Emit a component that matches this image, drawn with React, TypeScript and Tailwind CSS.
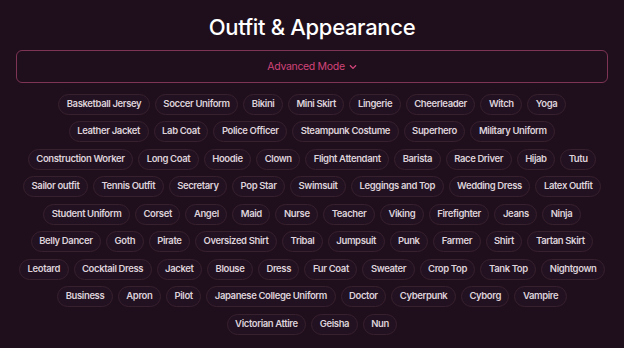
import { FaChevronDown } from 'react-icons/fa';

const ROWS = [
  ['Basketball Jersey', 'Soccer Uniform', 'Bikini', 'Mini Skirt', 'Lingerie', 'Cheerleader', 'Witch', 'Yoga'],
  ['Leather Jacket', 'Lab Coat', 'Police Officer', 'Steampunk Costume', 'Superhero', 'Military Uniform'],
  ['Construction Worker', 'Long Coat', 'Hoodie', 'Clown', 'Flight Attendant', 'Barista', 'Race Driver', 'Hijab', 'Tutu'],
  ['Sailor outfit', 'Tennis Outfit', 'Secretary', 'Pop Star', 'Swimsuit', 'Leggings and Top', 'Wedding Dress', 'Latex Outfit'],
  ['Student Uniform', 'Corset', 'Angel', 'Maid', 'Nurse', 'Teacher', 'Viking', 'Firefighter', 'Jeans', 'Ninja'],
  ['Belly Dancer', 'Goth', 'Pirate', 'Oversized Shirt', 'Tribal', 'Jumpsuit', 'Punk', 'Farmer', 'Shirt', 'Tartan Skirt'],
  ['Leotard', 'Cocktail Dress', 'Jacket', 'Blouse', 'Dress', 'Fur Coat', 'Sweater', 'Crop Top', 'Tank Top', 'Nightgown'],
  ['Business', 'Apron', 'Pilot', 'Japanese College Uniform', 'Doctor', 'Cyberpunk', 'Cyborg', 'Vampire'],
  ['Victorian Attire', 'Geisha', 'Nun'],
];

export default function App() {
  return (
    <div className="min-h-[348px] w-full overflow-hidden bg-[#1f0e1b] pt-3 font-['Inter',sans-serif]">
      <h1 className="text-center text-[22px] font-medium leading-[30px] tracking-[-0.015em] text-white">
        Outfit &amp; Appearance
      </h1>

      <div className="mx-4 mt-2 flex h-[33px] items-center justify-center rounded-md border border-[#7d3455]">
        <button className="flex items-center gap-[4px] text-[10.5px] tracking-[-0.03em] text-[#d0457a]">
          Advanced Mode
          <FaChevronDown size={8} />
        </button>
      </div>

      <div className="mt-[10.5px] flex flex-col gap-[6.5px]">
        {ROWS.map((row, i) => (
          <div key={i} className="flex justify-center gap-[5px]">
            {row.map((item) => (
              <span
                key={item}
                className="flex h-[21px] shrink-0 items-center whitespace-nowrap rounded-full border border-[#38212f] bg-[#221120] px-[7.5px] text-[9.5px] font-semibold tracking-[-0.04em] text-[#ddd2da]"
              >
                {item}
              </span>
            ))}
          </div>
        ))}
      </div>
    </div>
  );
}
